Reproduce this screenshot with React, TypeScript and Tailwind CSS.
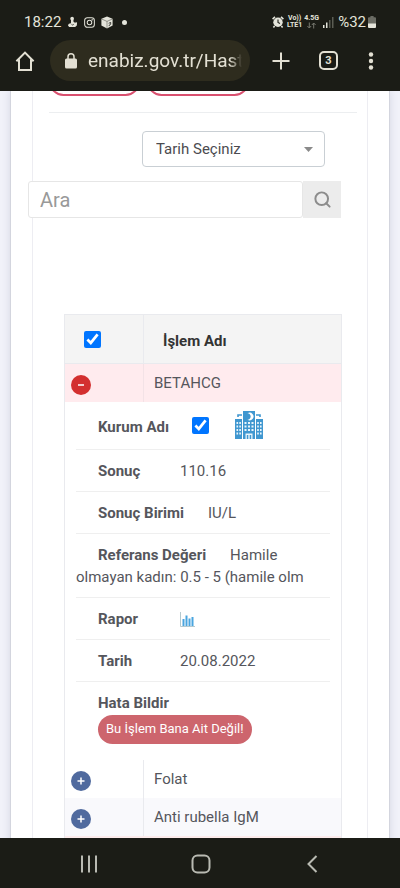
import type { ReactNode } from 'react';
import { Search } from 'lucide-react';

const otherRows = [
  { name: 'Folat', bg: 'bg-white' },
  { name: 'Anti rubella IgM', bg: 'bg-[#f9f9fc]' },
];

function StatusBar() {
  return (
    <div className="flex h-10 items-center pt-1 pl-6 pr-6 text-[#e4e4da]">
      <span className="text-[15px] leading-5">18:22</span>
      <div className="ml-[6px] flex items-center gap-[6px]">
        <svg width="11" height="12" viewBox="0 0 12 12" fill="currentColor">
          <circle cx="5.6" cy="2.4" r="2" />
          <path d="M4.4 3.5h2.5l.3 2.4 2.2 1.2V5.6l1.6 1.2-.3 3.1-1.8 1.5H2.3L1 9.6l1.1-1.8 2.2-.5z" />
          <path d="M2 6.4l1.8-.8M4.8 8.5l1.6 1 1-1.4" stroke="#1b1c16" strokeWidth=".7" fill="none" />
        </svg>
        <svg width="11" height="11" viewBox="0 0 12 12" fill="none" stroke="currentColor" strokeWidth="1.1">
          <rect x=".7" y=".7" width="10.6" height="10.6" rx="3" />
          <circle cx="6" cy="6" r="2.5" />
          <circle cx="9" cy="3" r=".3" />
        </svg>
        <svg width="12" height="13" viewBox="0 0 12 13" fill="currentColor">
          <path d="M6 .4l5.6 2.4v6.8L6 12.6.4 9.6V2.8z" />
          <path d="M.6 3L6 5.4 11.4 3M6 5.4v7" stroke="#1b1c16" strokeWidth=".4" fill="none" />
          <path d="M7.7 7.3l2-.9v1.9l-1.5.8v1" stroke="#1b1c16" strokeWidth=".8" fill="none" />
        </svg>
        <span className="ml-[3px] size-[5px] rounded-full bg-[#e4e4da]" />
      </div>
      <div className="ml-auto flex items-center">
        <svg width="12" height="12" viewBox="0 0 12 12" fill="currentColor">
          <circle cx="6" cy="6.2" r="4.7" />
          <path d="M.6 3.1L3 .9M11.4 3.1L9 .9M2.6 10l-1.2 1.4M9.4 10l1.2 1.4" stroke="currentColor" strokeWidth="1.6" />
          <path d="M6 3.4v3l2 1" stroke="#1b1c16" strokeWidth="1.1" fill="none" />
        </svg>
        <span className="ml-[3px] flex flex-col items-center text-[7px] font-bold leading-[7px]">
          <span>Vo))</span>
          <span>LTE1</span>
        </span>
        <span className="ml-[2px] flex flex-col items-center text-[7px] font-bold leading-[7px]">
          <span>4.5G</span>
          <svg width="9" height="7" viewBox="0 0 9 7" fill="none" stroke="#77786f" strokeWidth="1">
            <path d="M2.3 .5v5.4M.4 4l1.9 2 1.9-2M6.7 6.5V1M4.8 3l1.9-2 1.9 2" />
          </svg>
        </span>
        <svg className="ml-1" width="11" height="11" viewBox="0 0 11 11" fill="currentColor">
          <rect x="0" y="8" width="1.5" height="3" />
          <rect x="3" y="5.5" width="1.5" height="5.5" />
          <g fill="#5b5c53">
            <rect x="6" y="3" width="1.5" height="8" />
            <rect x="9" y="0" width="1.5" height="11" />
          </g>
        </svg>
        <span className="ml-1 text-[15px] leading-5">%32</span>
        <svg className="ml-[2px]" width="8" height="12" viewBox="0 0 8 12">
          <path d="M2.4 0h3.2v1.2H7q1 0 1 1V8H0V2.2q0-1 1-1h1.4z" fill="#6b6c64" />
          <path d="M0 7.5h8V11q0 1-1 1H1q-1 0-1-1z" fill="#e4e4da" />
        </svg>
      </div>
    </div>
  );
}

function BrowserBar() {
  return (
    <div className="flex items-start pb-[10px] text-[#e3e0d3]">
      <button aria-label="Ana sayfa" className="flex h-[41px] w-[50px] items-center justify-center">
        <svg width="20" height="20" viewBox="0 0 20 20" fill="none" stroke="currentColor" strokeWidth="2">
          <path d="M1.4 10.2L10 1.6l8.6 8.6M4 8.5v10.4h12V8.5" />
        </svg>
      </button>
      <div className="flex h-[41px] min-w-0 flex-1 items-center rounded-full bg-[#2e2c1e] pl-[15px] pr-2">
        <svg className="shrink-0" width="12" height="16" viewBox="0 0 12 16">
          <rect x="0" y="5.5" width="12" height="10" rx="1.5" fill="currentColor" />
          <path d="M3 6V3.8a3 3 0 0 1 6 0V6" fill="none" stroke="currentColor" strokeWidth="1.5" />
        </svg>
        <input
          aria-label="Adres"
          readOnly
          value="enabiz.gov.tr/Hasta"
          className="ml-[11px] min-w-0 flex-1 bg-transparent text-[19px] leading-6 outline-none [mask-image:linear-gradient(to_right,#000_92%,transparent)]"
        />
      </div>
      <div className="flex h-[41px] items-center pl-[22px] pr-[26px]">
        <button aria-label="Yeni sekme">
          <svg width="18" height="18" viewBox="0 0 18 18" stroke="currentColor" strokeWidth="2">
            <path d="M9 .5v17M.5 9h17" />
          </svg>
        </button>
        <button
          aria-label="Sekmeler"
          className="ml-[29px] flex size-[19px] items-center justify-center rounded-[5px] border-2 border-[#e3e0d3] text-[11px] font-bold leading-none"
        >
          3
        </button>
        <button aria-label="Menü" className="ml-[30px]">
          <svg width="6" height="18" viewBox="0 0 6 18" fill="currentColor">
            <circle cx="3" cy="2.5" r="2.2" />
            <circle cx="3" cy="9" r="2.2" />
            <circle cx="3" cy="15.5" r="2.2" />
          </svg>
        </button>
      </div>
    </div>
  );
}

function Detail({ title, children }: { title: string; children: ReactNode }) {
  return (
    <li className="border-b border-[#efefef] pt-[10px] pb-[9px]">
      <span className="ml-[22px] mr-6 inline-block min-w-[58px] font-bold">{title}</span>
      {children}
    </li>
  );
}

function HospitalIcon() {
  return (
    <svg width="28" height="28" viewBox="0 0 28 28" fill="#4097d0">
      <path d="M8 0h12v28H8zM0 8h7v20H0zM21 8h7v20h-7z" />
      <path d="M3 6V4h4M25 6V4h-4" stroke="#4097d0" strokeWidth="1.6" fill="none" />
      <path d="M12.5 2.2a3.9 3.9 0 1 1 0 6.6a3.6 3.6 0 0 0 3.2-3.3a3.6 3.6 0 0 0-3.2-3.3z" fill="#fff" />
      <g fill="#e9f5fc">
        <path d="M9.5 11h2v2h-2zM13 11h2v2h-2zM16.5 11h2v2h-2zM9.5 14.5h2v2h-2zM13 14.5h2v2h-2zM16.5 14.5h2v2h-2zM9.5 18h2v2h-2zM13 18h2v2h-2zM16.5 18h2v2h-2z" />
        <path d="M1.5 11h1.6v2h-1.6zM4.3 11h1.6v2h-1.6zM1.5 14.5h1.6v2h-1.6zM4.3 14.5h1.6v2h-1.6zM1.5 18h1.6v2h-1.6zM4.3 18h1.6v2h-1.6zM1.5 21.5h1.6v2h-1.6zM4.3 21.5h1.6v2h-1.6z" />
        <path d="M22.2 11h1.6v2h-1.6zM25 11h1.6v2h-1.6zM22.2 14.5h1.6v2h-1.6zM25 14.5h1.6v2h-1.6zM22.2 18h1.6v2h-1.6zM25 18h1.6v2h-1.6zM22.2 21.5h1.6v2h-1.6zM25 21.5h1.6v2h-1.6z" />
        <path d="M10.5 22.5h7V28h-1.3v-4h-1.5v4h-1.4v-4h-1.5v4h-1.3z" />
      </g>
    </svg>
  );
}

function Toggle({ open }: { open?: boolean }) {
  return (
    <button
      aria-label={open ? 'Kapat' : 'Aç'}
      className={`flex size-5 items-center justify-center rounded-full ${open ? 'bg-[#d32f2f]' : 'bg-[#506a9e]'}`}
    >
      <svg width="8" height="8" viewBox="0 0 8 8" stroke="#fff" strokeWidth="1.5">
        <path d={open ? 'M1 4h6' : 'M.5 4h7M4 .5v7'} />
      </svg>
    </button>
  );
}

function ResultsTable() {
  return (
    <table className="w-full table-fixed border-collapse border border-[#e9eaee] text-left text-[15px] leading-[22px] text-[#55565c]">
      <thead>
        <tr className="h-[49px] border-b border-[#e9eaee] bg-[#f4f4f4] text-[#333]">
          <th className="w-[79px] border-r border-[#e9eaee] pl-[19px]">
            <input type="checkbox" defaultChecked aria-label="Tümünü seç" className="block size-[17px] accent-[#0075ff]" />
          </th>
          <th className="pt-1 pl-[19px] font-bold">İşlem Adı</th>
        </tr>
      </thead>
      <tbody>
        <tr className="h-[38px] bg-[#ffebee]">
          <td className="border-r border-[#f3e2e6] pt-1 pl-[6px]">
            <Toggle open />
          </td>
          <td className="pl-[10px]">BETAHCG</td>
        </tr>
        <tr>
          <td colSpan={2} className="px-[11px] pb-4">
            <ul>
              <li className="flex h-12 items-center border-b border-[#efefef] pl-[22px]">
                <label htmlFor="kurum" className="pt-1 font-bold">Kurum Adı</label>
                <input id="kurum" type="checkbox" defaultChecked className="ml-[23px] mr-[26px] size-[17px] accent-[#0075ff]" />
                <HospitalIcon />
              </li>
              <Detail title="Sonuç">110.16</Detail>
              <Detail title="Sonuç Birimi">IU/L</Detail>
              <Detail title="Referans Değeri">Hamile olmayan kadın: 0.5 - 5 (hamile olm</Detail>
              <Detail title="Rapor">
                <a href="#rapor" aria-label="Rapor" className="inline-block align-middle">
                  <svg width="15" height="15" viewBox="0 0 15 15" fill="#4aa5df">
                    <path d="M2.5 7h2v7h-2zM5.5 3.5h2V14h-2zM8.5 6.5h2V14h-2zM11.5 5h2v9h-2z" />
                    <path d="M.5 0v14.5H15" stroke="#b5c9cf" strokeWidth="1" fill="none" />
                  </svg>
                </a>
              </Detail>
              <Detail title="Tarih">20.08.2022</Detail>
              <li className="pt-[10px] pl-[22px]">
                <span className="block font-bold">Hata Bildir</span>
                <button className="mt-px block h-[29px] rounded-full bg-[#cd656d] px-2 text-[13px] text-white">
                  Bu İşlem Bana Ait Değil!
                </button>
              </li>
            </ul>
          </td>
        </tr>
        {otherRows.map((row) => (
          <tr key={row.name} className={`h-[38px] ${row.bg}`}>
            <td className="border-r border-[#e9eaee] pt-1 pl-[6px]">
              <Toggle />
            </td>
            <td className="pl-[10px]">{row.name}</td>
          </tr>
        ))}
        <tr className="h-[38px] bg-[#fdecec]">
          <td colSpan={2} />
        </tr>
      </tbody>
    </table>
  );
}

export default function App() {
  return (
    <div className="flex h-screen flex-col overflow-hidden bg-[#1b1c16] font-[Roboto,sans-serif]">
      <header className="shrink-0">
        <StatusBar />
        <BrowserBar />
      </header>

      <main className="min-h-0 flex-1 overflow-hidden bg-[#f1f2f9] px-[10px]">
        <div className="flow-root min-h-full border-x border-[#d3d5de] bg-white px-[21px] shadow-[0_0_8px_rgba(90,95,130,0.18)]">
          <div className="flow-root border-x border-[#ededf2]">
            {/* Filter chips, scrolled partly under the browser bar */}
            <div className="mr-[10px] ml-4 -mt-6 flex gap-[7px] border-b border-[#eceef0] pb-4">
              <button aria-label="Filtre" className="h-[29px] w-[91px] rounded-full border-2 border-[#d9506f]" />
              <button aria-label="Filtre" className="h-[29px] w-[102px] rounded-full border-2 border-[#d9506f]" />
            </div>

            <div className="relative mt-[18px] mr-[42px] ml-[109px]">
              <select
                aria-label="Tarih"
                className="block h-9 w-full appearance-none rounded-[4px] border border-[#c9cfd4] bg-white pl-[13px] text-[15px] text-[#4b4b4f]"
              >
                <option>Tarih Seçiniz</option>
              </select>
              <svg className="pointer-events-none absolute top-4 right-3" width="9" height="5" viewBox="0 0 9 5" fill="#8a8a8a">
                <path d="M0 0h9L4.5 5z" />
              </svg>
            </div>

            <form className="relative mt-[14px] mr-[26px] -ml-[5px] flex">
              <input
                type="text"
                aria-label="Ara"
                placeholder="Ara"
                className="h-[37px] min-w-0 flex-1 rounded-[3px] border border-[#e6e6e6] bg-white pl-[11px] text-[20px] placeholder:text-[#999]"
              />
              <button type="button" aria-label="Ara" className="flex w-[38px] items-center justify-center bg-[#ececec] text-[#8c8c8c]">
                <Search size={19} strokeWidth={2.5} />
              </button>
            </form>

            <div className="mt-24 mr-[25px] ml-[31px]">
              <ResultsTable />
            </div>
          </div>
        </div>
      </main>

      <nav className="flex h-[50px] shrink-0 items-center justify-between pt-[2px] pr-[79px] pl-20 text-[#b9bab2]">
        <button aria-label="Son uygulamalar">
          <svg width="18" height="18" viewBox="0 0 18 18" stroke="currentColor" strokeWidth="2">
            <path d="M2 .5v17M9 .5v17M16 .5v17" />
          </svg>
        </button>
        <button aria-label="Ana ekran">
          <svg width="20" height="20" viewBox="0 0 20 20" fill="none" stroke="currentColor" strokeWidth="2">
            <rect x="1.5" y="1.5" width="17" height="17" rx="5" />
          </svg>
        </button>
        <button aria-label="Geri">
          <svg width="18" height="18" viewBox="0 0 18 18" fill="none" stroke="currentColor" strokeWidth="2">
            <path d="M13.5 1L5.5 9l8 8" />
          </svg>
        </button>
      </nav>
    </div>
  );
}
